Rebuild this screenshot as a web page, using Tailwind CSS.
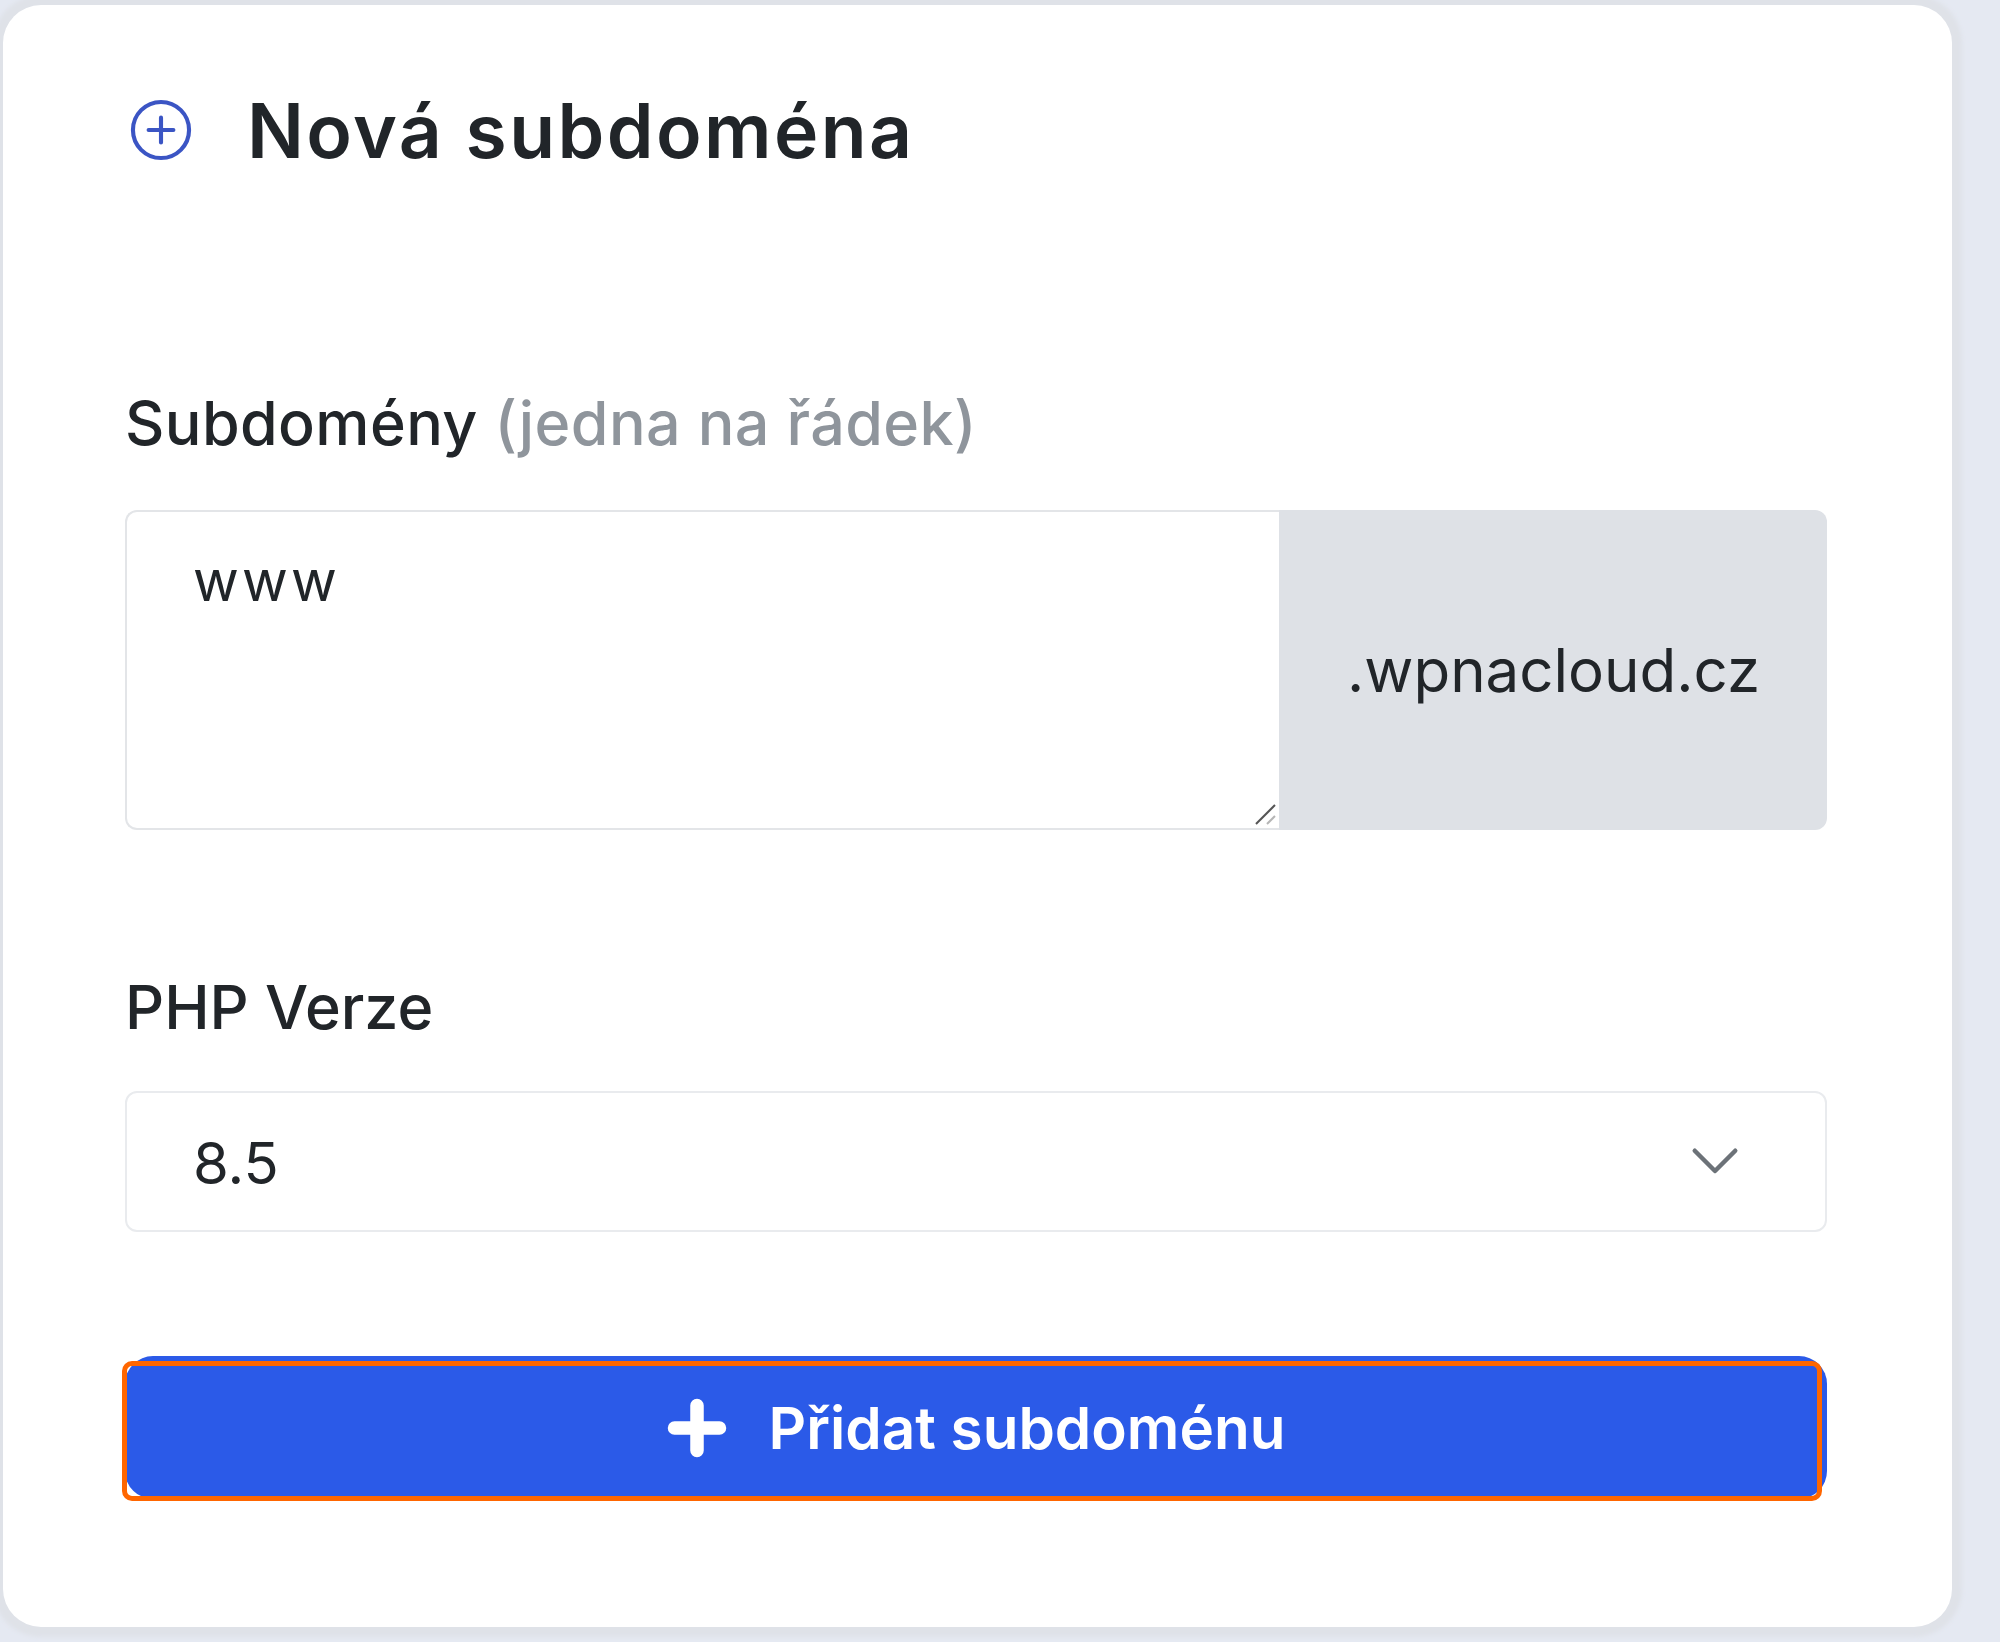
<!DOCTYPE html>
<html>
	<head>
		<meta charset="UTF-8" />
		<title>Nová subdoména</title>
		<script src="https://cdn.jsdelivr.net/npm/@tailwindcss/browser@4"></script>
	</head>
	<body class="w-[2000px] h-[1642px] overflow-hidden bg-[#e5e9f2] font-['Inter',sans-serif] text-[#212529]">
		<div class="ml-[3px] mt-[5px] w-[1949px] h-[1622px] bg-white rounded-[38px] pl-[122px] pr-[125px] pt-[90px] flex flex-col shadow-[0_0_4px_10px_#dfe2e8]">
			<div class="flex items-center gap-[53px] h-[72px] pl-[3px]">
				<svg class="w-[66px] h-[66px] text-[#3b55c4] -mt-[2px]" viewBox="0 0 24 24" fill="none" stroke="currentColor" stroke-width="1.5" stroke-linecap="round">
					<circle cx="12" cy="12" r="10.2" />
					<path d="M12 7.5v9M7.5 12h9" />
				</svg>
				<h2 class="text-[75px] leading-none font-semibold tracking-[2.4px] -mt-[2px]">Nová subdoména</h2>
			</div>

			<label class="mt-[221px] text-[61px] leading-[70px] font-medium tracking-[0.4px]">
				Subdomény <span class="text-[#8f959c]">(jedna na řádek)</span>
			</label>

			<div class="mt-[52px] flex h-[320px] w-full">
				<div class="relative flex-1 bg-white rounded-l-[12px] border-[2px] border-r-0 border-[#e3e5e8] pl-[66px] pt-[34px] text-[56px] leading-[70px] tracking-[3.2px]">
					www
					<svg class="absolute right-[2px] bottom-[2px] w-[24px] h-[24px]" viewBox="0 0 24 24" fill="none" stroke-width="2">
						<path d="M22 3 3 22" stroke="#555555" />
						<path d="M22 14 14 22" stroke="#b5b5b5" />
					</svg>
				</div>
				<div class="w-[548px] bg-[#dee1e6] rounded-r-[12px] flex items-center pl-[68px] text-[60px]">.wpnacloud.cz</div>
			</div>

			<label class="mt-[142px] text-[61px] leading-[70px] font-medium">PHP Verze</label>

			<div class="mt-[49px] flex items-center justify-between h-[141px] w-full rounded-[12px] border-[2px] border-[#e9ebee] pl-[66px] pr-[83px] text-[58px]">
				<span class="pt-[3px]">8.5</span>
				<svg class="w-[54px] h-[54px] text-[#6c7278]" viewBox="0 0 24 24" fill="none" stroke="currentColor" stroke-width="2" stroke-linecap="round" stroke-linejoin="round">
					<path d="M3 7l9 9 9-9" />
				</svg>
			</div>

			<div class="relative mt-[124px]">
				<button class="w-full h-[143px] rounded-[28px] bg-[#2b5ae8] text-white text-[58.4px] font-semibold flex items-center justify-center gap-[42px]">
					<svg class="w-[60px] h-[60px]" viewBox="0 0 24 24" fill="none" stroke="currentColor" stroke-width="5.4" stroke-linecap="round">
						<path d="M12 3v18M3 12h18" />
					</svg>
					Přidat subdoménu
				</button>
				<div class="absolute -left-[3px] top-[5px] w-[1700px] h-[140px] rounded-[10px] border-[5px] border-[#ff6600]"></div>
			</div>
		</div>
	</body>
</html>
